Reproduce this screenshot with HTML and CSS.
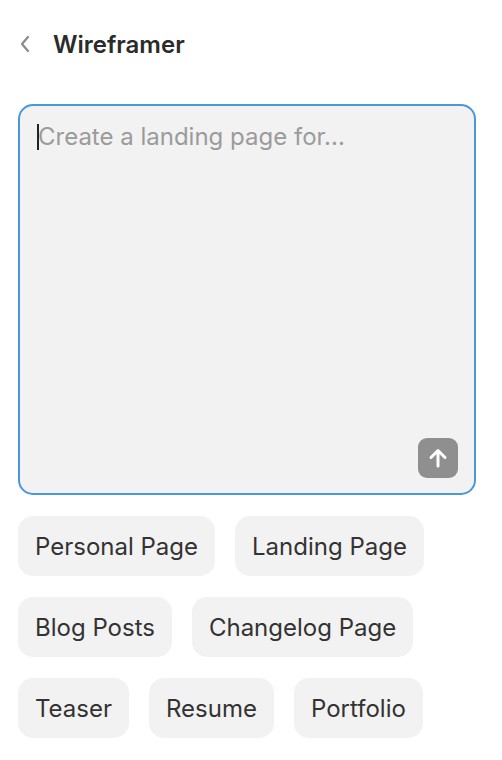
FILE: index.html
```html
<!DOCTYPE html>
<html lang="en">
<head>
  <meta charset="UTF-8" />
  <meta name="viewport" content="width=device-width, initial-scale=1.0" />
  <title>Wireframer</title>
  <link rel="stylesheet" href="styles.css">
</head>
<body>
  <div class="page">
    <header class="topbar">
      <button class="back" aria-label="Back">
        <svg width="12" height="18" viewBox="0 0 12 18"><path d="M9 2 L3 9 L9 16" fill="none" stroke="#8a8a8a" stroke-width="2.2" stroke-linecap="round" stroke-linejoin="round"/></svg>
      </button>
      <h1>Wireframer</h1>
    </header>

    <div class="prompt">
      <div class="prompt-text"><span class="caret"></span><span class="placeholder">Create a landing page for...</span></div>
      <button class="send" aria-label="Send">
        <svg width="24" height="24" viewBox="0 0 24 24"><path d="M12 20 V5 M5 11.5 L12 4.5 L19 11.5" fill="none" stroke="#fff" stroke-width="3" stroke-linecap="round" stroke-linejoin="round"/></svg>
      </button>
    </div>

    <div class="chips">
      <button class="chip">Personal Page</button>
      <button class="chip">Landing Page</button>
      <button class="chip">Blog Posts</button>
      <button class="chip">Changelog Page</button>
      <button class="chip">Teaser</button>
      <button class="chip">Resume</button>
      <button class="chip">Portfolio</button>
    </div>
  </div>
</body>
</html>
```

FILE: styles.css
```css
body {
  margin: 0;
  background: #fff;
  font-family: Inter, "Noto Sans", sans-serif;
  color: #333;
}

.page {
  padding: 0 26px 0 18px;
}

.topbar {
  display: flex;
  align-items: center;
  height: 88px;
}

.back {
  border: none;
  background: none;
  padding: 0;
  margin: 0 22px 0 1px;
  display: flex;
  align-items: center;
  cursor: pointer;
}

h1 {
  margin: 0;
  font-size: 24px;
  font-weight: 600;
  color: #2b2b2b;
}

.prompt {
  margin-top: 16px;
  height: 387px;
  border: 2px solid #4a97db;
  border-radius: 15px;
  background: #f2f2f2;
  position: relative;
}

.prompt-text {
  display: flex;
  align-items: center;
  padding: 17px 17px;
  font-size: 24px;
  line-height: 28px;
}

.caret {
  width: 2px;
  height: 26px;
  background: #222;
  margin-right: -1px;
}

.placeholder {
  color: #9b9b9b;
}

.send {
  position: absolute;
  right: 16px;
  bottom: 15px;
  width: 40px;
  height: 40px;
  border: none;
  border-radius: 9px;
  background: #8f8f8f;
  display: flex;
  align-items: center;
  justify-content: center;
  padding: 0;
}

.chips {
  display: flex;
  flex-wrap: wrap;
  gap: 21px 20px;
  margin-top: 21px;
}

.chip {
  height: 60px;
  padding: 0 17px;
  border: none;
  border-radius: 15px;
  background: #f2f2f2;
  font-family: inherit;
  font-size: 24px;
  color: #333;
}
```
